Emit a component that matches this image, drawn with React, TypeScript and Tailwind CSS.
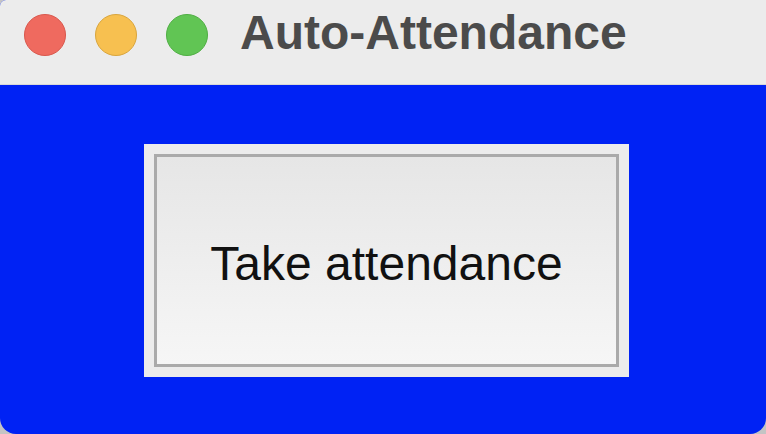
export default function App() {
  return (
    <div className="w-[766px] h-[434px] bg-[#c4c4c4]">
      <div className="flex h-full flex-col overflow-hidden rounded-b-[16px] rounded-tl-[6px] bg-[#0022f4]">
        {/* title bar */}
        <div className="h-[85px] shrink-0 bg-[#ececec] border-b border-[#d8d8d8]">
          <div className="flex h-[70px] items-center pl-[24px]">
            <div className="flex gap-[29px]">
              <span className="block h-[42px] w-[42px] rounded-full border border-[#d9574c] bg-[#ef6a5f]" />
              <span className="block h-[42px] w-[42px] rounded-full border border-[#d9a53c] bg-[#f7c050]" />
              <span className="block h-[42px] w-[42px] rounded-full border border-[#4fae43] bg-[#61c554]" />
            </div>
            <h1 className="ml-[32px] mb-[5px] font-['Liberation_Sans',Arial,sans-serif] text-[48px] font-bold leading-none text-[#4b4b4b]">
              Auto-Attendance
            </h1>
          </div>
        </div>

        {/* content */}
        <div className="flex flex-1 justify-center pt-[59px] pl-[7px]">
          <div className="h-[233px] w-[485px] bg-[#ececec] p-[10px]">
            <button className="flex h-full w-full items-center justify-center border-[3px] border-[#aaaaaa] bg-gradient-to-b from-[#e6e6e6] to-[#f6f6f6]">
              <span className="mt-[7px] font-['Liberation_Sans',Arial,sans-serif] text-[48px] text-[#111111]">
                Take attendance
              </span>
            </button>
          </div>
        </div>
      </div>
    </div>
  );
}
